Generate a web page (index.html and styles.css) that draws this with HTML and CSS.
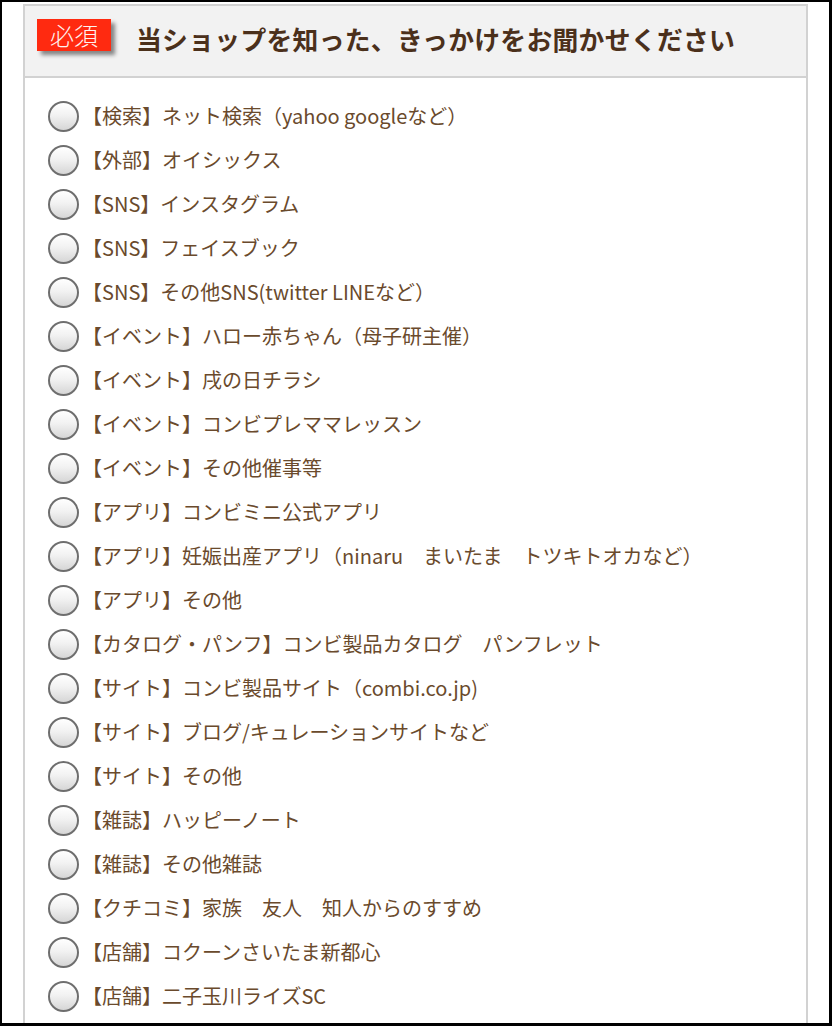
FILE: index.html
```html
<!DOCTYPE html>
<html lang="ja">
<head>
    <meta charset="UTF-8">
    <meta name="viewport" content="width=device-width, initial-scale=1.0">
    <title>当ショップを知った、きっかけ</title>
    <link rel="stylesheet" href="styles.css">
</head>
<body>

<div class="frame">
    <div class="question">
        <div class="question-head">
            <span class="required">必須</span>
            <h2>当ショップを知った、きっかけをお聞かせください</h2>
        </div>
        <form class="options">
            <label class="option"><input type="radio" name="trigger"><span>【検索】ネット検索（yahoo googleなど）</span></label>
            <label class="option"><input type="radio" name="trigger"><span>【外部】オイシックス</span></label>
            <label class="option"><input type="radio" name="trigger"><span>【SNS】インスタグラム</span></label>
            <label class="option"><input type="radio" name="trigger"><span>【SNS】フェイスブック</span></label>
            <label class="option"><input type="radio" name="trigger"><span>【SNS】その他SNS(twitter LINEなど）</span></label>
            <label class="option"><input type="radio" name="trigger"><span>【イベント】ハロー赤ちゃん（母子研主催）</span></label>
            <label class="option"><input type="radio" name="trigger"><span>【イベント】戌の日チラシ</span></label>
            <label class="option"><input type="radio" name="trigger"><span>【イベント】コンビプレママレッスン</span></label>
            <label class="option"><input type="radio" name="trigger"><span>【イベント】その他催事等</span></label>
            <label class="option"><input type="radio" name="trigger"><span>【アプリ】コンビミニ公式アプリ</span></label>
            <label class="option"><input type="radio" name="trigger"><span>【アプリ】妊娠出産アプリ（ninaru　まいたま　トツキトオカなど）</span></label>
            <label class="option"><input type="radio" name="trigger"><span>【アプリ】その他</span></label>
            <label class="option"><input type="radio" name="trigger"><span>【カタログ・パンフ】コンビ製品カタログ　パンフレット</span></label>
            <label class="option"><input type="radio" name="trigger"><span>【サイト】コンビ製品サイト（combi.co.jp)</span></label>
            <label class="option"><input type="radio" name="trigger"><span>【サイト】ブログ/キュレーションサイトなど</span></label>
            <label class="option"><input type="radio" name="trigger"><span>【サイト】その他</span></label>
            <label class="option"><input type="radio" name="trigger"><span>【雑誌】ハッピーノート</span></label>
            <label class="option"><input type="radio" name="trigger"><span>【雑誌】その他雑誌</span></label>
            <label class="option"><input type="radio" name="trigger"><span>【クチコミ】家族　友人　知人からのすすめ</span></label>
            <label class="option"><input type="radio" name="trigger"><span>【店舗】コクーンさいたま新都心</span></label>
            <label class="option"><input type="radio" name="trigger"><span>【店舗】二子玉川ライズSC</span></label>
        </form>
    </div>
</div>

</body>
</html>
```

FILE: styles.css
```css
html, body {
    margin: 0;
    padding: 0;
    height: 100%;
}

body {
    font-family: "Noto Sans CJK JP", "Noto Sans", sans-serif;
    background-color: #fff;
    overflow: hidden;
}

.frame {
    box-sizing: border-box;
    height: 1026px;
    border-style: solid;
    border-color: #000;
    border-width: 2px 3px 3px 2px;
    padding: 2px 21px 0 21px;
    overflow: hidden;
}

.question {
    border: 2px solid #d2d2d2;
    border-bottom: none;
    min-height: 1100px;
}

.question-head {
    display: flex;
    align-items: center;
    height: 70px;
    padding-left: 12px;
    background-color: #f2f2f2;
    border-bottom: 2px solid #d2d2d2;
}

.required {
    display: flex;
    align-items: center;
    justify-content: center;
    width: 74px;
    height: 32px;
    margin-top: -12px;
    background-color: #ff2a10;
    color: #fff3f0;
    font-size: 24px;
    font-weight: 300;
    line-height: 1;
    box-shadow: 4px 4px 4px rgba(0, 0, 0, 0.45);
}

.question-head h2 {
    margin: -5px 0 0 25px;
    font-size: 25.8px;
    font-weight: bold;
    color: #4b301b;
    letter-spacing: 0.3px;
}

.options {
    padding: 16px 0 0 23px;
}

.option {
    display: flex;
    align-items: center;
    height: 44px;
    color: #6a4a2c;
    font-size: 20px;
}

.option span {
    margin-top: -2px;
}

.option input {
    appearance: none;
    -webkit-appearance: none;
    box-sizing: border-box;
    width: 31px;
    height: 31px;
    margin: 0 3px 0 0;
    flex-shrink: 0;
    border: 2px solid #6e6e6e;
    border-radius: 50%;
    background: linear-gradient(to bottom, #ffffff 0%, #f2f2f2 45%, #d6d6d6 100%);
}
```
